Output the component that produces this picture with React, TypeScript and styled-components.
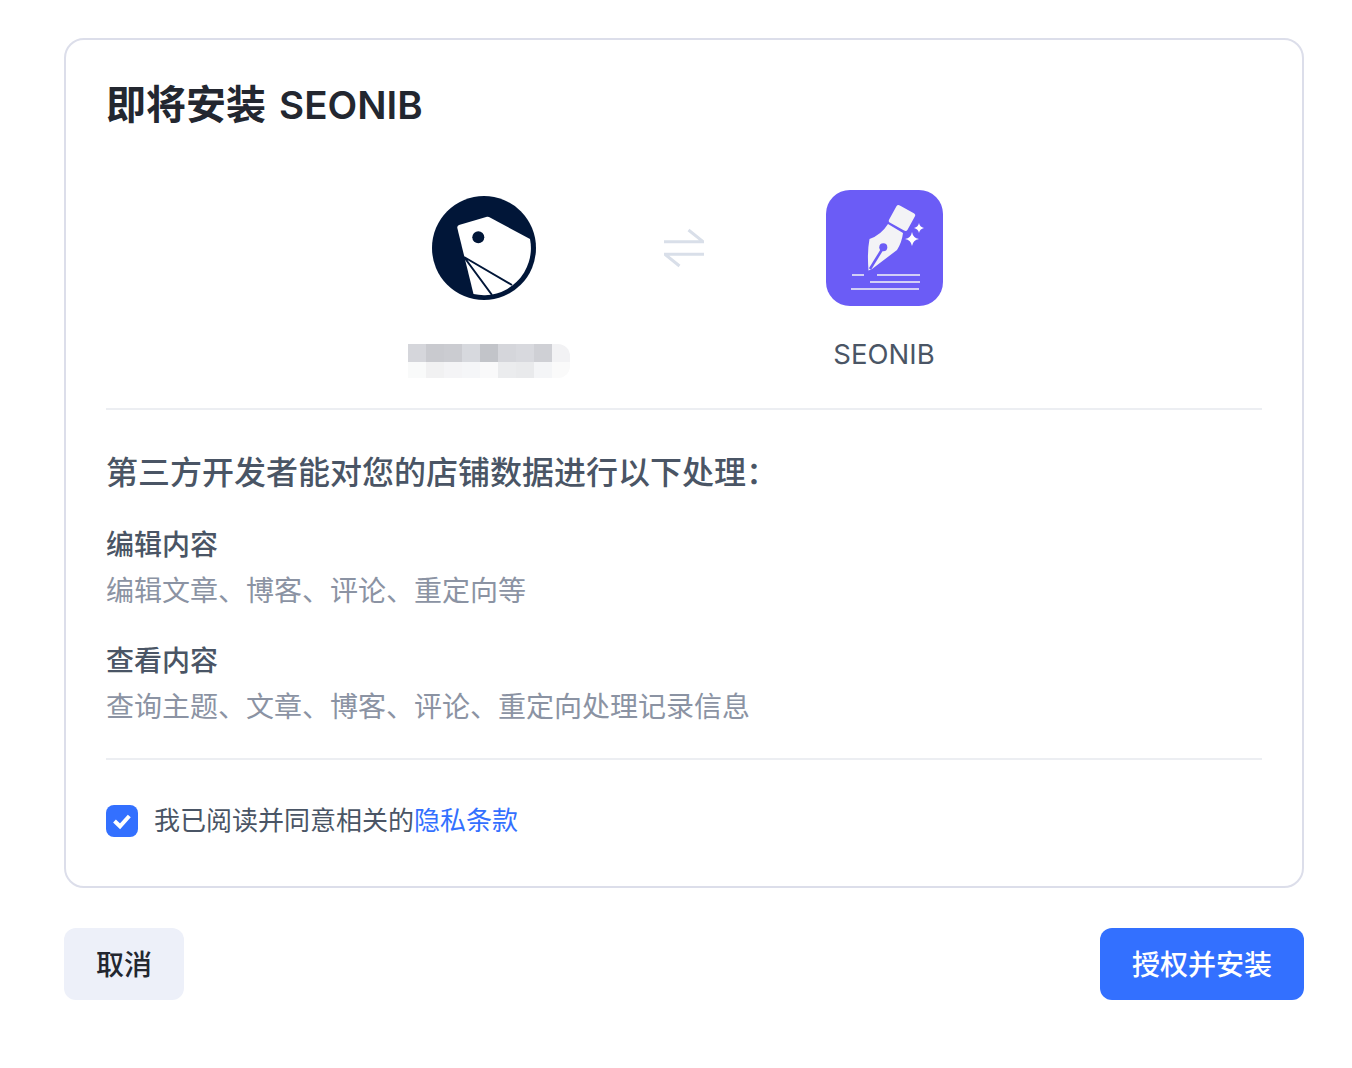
import styled, { createGlobalStyle } from "styled-components";

const GlobalStyle = createGlobalStyle`
  html, body {
    margin: 0;
    padding: 0;
    background: #fff;
  }
  body {
    font-family: Inter, "Noto Sans CJK SC", sans-serif;
  }
  * {
    box-sizing: border-box;
  }
`;

const Page = styled.div`
  width: 1240px;
  margin: 38px 0 0 64px;
`;

const Card = styled.section`
  height: 850px;
  border: 2px solid #dcdeea;
  border-radius: 20px;
  padding: 40px 40px 0;
  background: #fff;
`;

const Title = styled.h1`
  margin: 0;
  font-size: 40px;
  line-height: 50px;
  font-weight: 600;
  word-spacing: 3px;
  color: #232730;
`;

const TitleLatin = styled.span`
  font-size: 38.6px;
`;

const AppsRow = styled.div`
  display: flex;
  justify-content: center;
  align-items: flex-start;
  margin-top: 60px;
  padding-bottom: 30px;
  border-bottom: 2px solid #eceef2;
`;

const AppColumn = styled.div`
  width: 240px;
  display: flex;
  flex-direction: column;
  align-items: center;
`;

const LogoBox = styled.div`
  height: 116px;
  display: flex;
  align-items: center;
  justify-content: center;
`;

const AppName = styled.div`
  margin-top: 30px;
  height: 36px;
  font-size: 27.5px;
  line-height: 36px;
  color: #4a5565;
`;

const ArrowColumn = styled.div`
  width: 160px;
  height: 116px;
  display: flex;
  align-items: center;
  justify-content: center;
`;

// 打码的店铺名
const Mosaic = styled.div`
  margin: 38px 0 0 10px;
  display: grid;
  grid-template-columns: repeat(9, 18px);
  grid-template-rows: 18px 16px;
  border-radius: 0 12px 12px 0;
  overflow: hidden;
`;

const MosaicCell = styled.span<{ $color: string }>`
  background: ${(p) => p.$color};
`;

const SectionTitle = styled.h2`
  margin: 42px 0 0;
  font-size: 32px;
  line-height: 42px;
  font-weight: 500;
  color: #4a5565;
`;

const Permission = styled.div`
  margin-top: 29px;

  & + & {
    margin-top: 26px;
  }
`;

const PermissionName = styled.div`
  font-size: 28px;
  line-height: 45px;
  font-weight: 500;
  color: #4a5565;
`;

const PermissionDesc = styled.div`
  padding-top: 1px;
  font-size: 28px;
  line-height: 44px;
  color: #8b93a3;
`;

const Agreement = styled.label`
  margin-top: 29px;
  padding-top: 44px;
  border-top: 2px solid #eceef2;
  display: flex;
  align-items: center;
  gap: 16px;
  font-size: 26px;
  line-height: 34px;
  color: #4a5565;
`;

const CheckBox = styled.span`
  width: 32px;
  height: 32px;
  border-radius: 8px;
  background: #3370ff;
  display: flex;
  align-items: center;
  justify-content: center;
`;

const PrivacyLink = styled.a`
  color: #3370ff;
  text-decoration: none;
`;

const Footer = styled.div`
  margin-top: 40px;
  display: flex;
  justify-content: space-between;
`;

const Button = styled.button<{ $primary?: boolean }>`
  height: 72px;
  padding: 0 32px 2px;
  border: none;
  border-radius: 12px;
  font-family: inherit;
  font-size: 28px;
  font-weight: 500;
  background: ${(p) => (p.$primary ? "#3370ff" : "#edf0f9")};
  color: ${(p) => (p.$primary ? "#fff" : "#232730")};
  cursor: pointer;
`;

const mosaicColors = [
  "#d5d6db", "#c9cacf", "#cbccd1", "#d7d9de", "#c2c4c9", "#d5d6db", "#d8d9de", "#cfd0d5", "#f2f2f4",
  "#f9fafa", "#f1f1f2", "#f4f4f6", "#f5f6f8", "#f9f9fa", "#ebecee", "#e9eaec", "#f4f5f7", "#fafafa",
];

const permissions = [
  { name: "编辑内容", desc: "编辑文章、博客、评论、重定向等" },
  { name: "查看内容", desc: "查询主题、文章、博客、评论、重定向处理记录信息" },
];

const ShopLogo = () => (
  <svg width="104" height="104" viewBox="0 0 104 104">
    <circle cx="52" cy="52" r="52" fill="#011638" />
    <path
      d="M27 29 L55 20.7 Q56 20.5 57 21 L98 43 A47 47 0 0 1 41.5 98 L25.3 32 Q25 30 27 29 Z"
      fill="#fff"
    />
    <circle cx="46.3" cy="41.3" r="6" fill="#011638" />
    <path d="M32 61 L80 89 M32 61 L60 99" stroke="#011638" strokeWidth="2" fill="none" />
  </svg>
);

const SwapIcon = () => (
  <svg width="40" height="40" viewBox="0 0 40 40" fill="none" stroke="#d9dfe9" strokeWidth="3">
    <path d="M0 13.7 H39 L24.5 2" />
    <path d="M40 26.3 H1 L15.5 38" />
  </svg>
);

const SeonibLogo = () => (
  <svg width="117" height="116" viewBox="0 0 117 116">
    <rect width="117" height="116" rx="24" fill="#6b5cf6" />
    <rect x="65.5" y="18" width="21" height="20" rx="2.5" fill="#f3f3f6" transform="rotate(29 76 28)" />
    <path d="M62 34 L77 43 Q76 52 71 60 L46 79 L42.5 80.5 Q41 62 43.5 49 Q55 45 62 34 Z" fill="#f3f3f6" />
    <path d="M44 79 L57 58" stroke="#6b5cf6" strokeWidth="2.6" />
    <circle cx="57.3" cy="57.3" r="4" fill="#6b5cf6" />
    <path d="M86 42 Q87 48 93 49 Q87 50 86 56 Q85 50 79 49 Q85 48 86 42 Z" fill="#fff" />
    <path d="M93 33 Q93.7 37 98 38 Q93.7 39 93 43 Q92.3 39 88 38 Q92.3 37 93 33 Z" fill="#fff" />
    <path d="M26 85 H38 M51 85 H94 M44 92 H94 M25 99 H93" stroke="#f3f3f6" strokeWidth="1.6" />
  </svg>
);

const App = () => {
  return (
    <Page>
      <GlobalStyle />
      <Card>
        <Title>
          即将安装 <TitleLatin>SEONIB</TitleLatin>
        </Title>
        <AppsRow>
          <AppColumn>
            <LogoBox>
              <ShopLogo />
            </LogoBox>
            <Mosaic>
              {mosaicColors.map((color, i) => (
                <MosaicCell key={i} $color={color} />
              ))}
            </Mosaic>
          </AppColumn>
          <ArrowColumn>
            <SwapIcon />
          </ArrowColumn>
          <AppColumn>
            <LogoBox>
              <SeonibLogo />
            </LogoBox>
            <AppName>SEONIB</AppName>
          </AppColumn>
        </AppsRow>
        <SectionTitle>第三方开发者能对您的店铺数据进行以下处理：</SectionTitle>
        {permissions.map((item) => (
          <Permission key={item.name}>
            <PermissionName>{item.name}</PermissionName>
            <PermissionDesc>{item.desc}</PermissionDesc>
          </Permission>
        ))}
        <Agreement>
          <CheckBox>
            <svg width="32" height="32" viewBox="0 0 32 32" fill="none">
              <path d="M8.5 16 L14 21.3 L23.3 11" stroke="#fff" strokeWidth="4" />
            </svg>
          </CheckBox>
          <span>
            我已阅读并同意相关的<PrivacyLink href="#">隐私条款</PrivacyLink>
          </span>
        </Agreement>
      </Card>
      <Footer>
        <Button>取消</Button>
        <Button $primary>授权并安装</Button>
      </Footer>
    </Page>
  );
};

export default App;
